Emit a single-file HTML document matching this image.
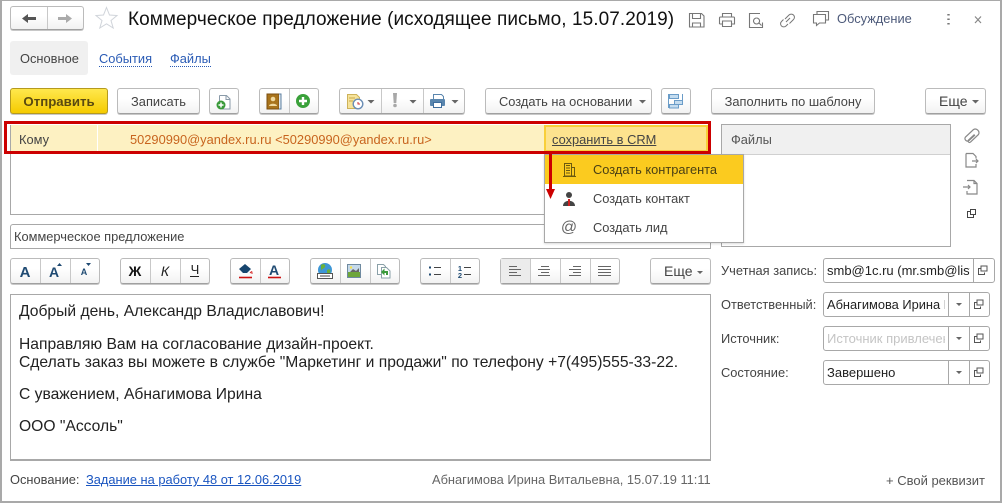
<!DOCTYPE html>
<html><head><meta charset="utf-8">
<style>
html,body{margin:0;padding:0;background:#fff}
#w{position:relative;width:1002px;height:503px;overflow:hidden;background:#fff;font-family:"Liberation Sans",sans-serif;font-size:12.85px;color:#3a3a3a}
#w>*{position:absolute;box-sizing:border-box}
.t{white-space:nowrap;line-height:16px}
.b{border:1px solid #bbb;border-bottom-color:#a0a0a0;border-radius:3px;background:linear-gradient(#fff 40%,#f2f2f2);box-shadow:0 1px 0 #c8c8c8;text-align:center;color:#444;white-space:nowrap;line-height:23px}
.s{width:1px;background:#c8c8c8}
.f{border:1px solid #a8a8a8;border-radius:3px;background:#fff}
.v{width:1px;background:#a8a8a8}
.lnk{color:#2a5bb5;border-bottom:1px dotted #2a5bb5;line-height:14px}
</style></head><body><div id="w">
<div style="left:0;top:0;width:1002px;height:503px;border:2px solid #a9a9a9;border-top-width:1px;border-bottom:0"></div>
<div style="left:0;top:501px;width:1002px;height:2px;background:#a9a9a9"></div>

<div class="b" style="left:10px;top:6px;width:74px;height:24px"></div>
<div class="s" style="left:47px;top:7px;height:22px"></div>
<div class="t" style="left:128px;top:10px;font-size:19px;line-height:20px;color:#111;letter-spacing:.07px">Коммерческое предложение (исходящее письмо, 15.07.2019)</div>
<div class="t" style="left:837px;top:11px;color:#4d5a7a">Обсуждение</div>

<div style="left:10px;top:41px;width:78px;height:34px;background:#f0f0f0;border-radius:3px"></div>
<div class="t" style="left:20px;top:51px;color:#444">Основное</div>
<div class="t lnk" style="left:99px;top:52px">События</div>
<div class="t lnk" style="left:170px;top:52px">Файлы</div>

<div class="b" style="left:10px;top:88px;width:98px;height:26px;background:linear-gradient(#ffe84d,#f5cb00);border-color:#b59a1e;font-weight:bold;color:#5a4a10;line-height:25px;font-size:13.25px">Отправить</div>
<div class="b" style="left:117px;top:88px;width:83px;height:26px;line-height:25px">Записать</div>
<div class="b" style="left:209px;top:88px;width:30px;height:26px"></div>
<div class="b" style="left:259px;top:88px;width:60px;height:26px"></div>
<div class="s" style="left:289px;top:89px;height:24px"></div>
<div class="b" style="left:339px;top:88px;width:126px;height:26px"></div>
<div class="s" style="left:381px;top:89px;height:24px"></div>
<div class="s" style="left:423px;top:89px;height:24px"></div>
<div class="b" style="left:485px;top:88px;width:167px;height:26px;line-height:25px;text-align:left;padding-left:13px">Создать на основании</div>
<div class="b" style="left:661px;top:88px;width:30px;height:26px"></div>
<div class="b" style="left:711px;top:88px;width:164px;height:26px;line-height:25px">Заполнить по шаблону</div>
<div class="b" style="left:925px;top:88px;width:61px;height:26px;line-height:25px;text-align:left;padding-left:13px;font-size:14px">Еще</div>

<div style="left:10px;top:125px;width:701px;height:90px;border:1px solid #a8a8a8;background:#fff"></div>
<div style="left:11px;top:125px;width:698px;height:27px;background:#fdf1c2"></div>
<div style="left:97px;top:125px;width:1px;height:27px;background:#fff"></div>
<div style="left:544px;top:125px;width:164px;height:27px;background:#fde38e;border:2px solid #f8cf3a"></div>
<div class="t" style="left:19px;top:132px;color:#444">Кому</div>
<div class="t" style="left:130px;top:132px;color:#c8641e">50290990@yandex.ru.ru &lt;50290990@yandex.ru.ru&gt;</div>
<div class="t" style="left:552px;top:132px;color:#444;text-decoration:underline">сохранить в CRM</div>
<div style="left:4px;top:121px;width:707px;height:33px;border:3px solid #cc0000"></div>

<div class="f" style="left:10px;top:224px;width:701px;height:25px;border-radius:3px 3px 0 0"></div>
<div class="t" style="left:14px;top:229px;color:#444">Коммерческое предложение</div>

<div style="left:721px;top:124px;width:230px;height:123px;border:1px solid #a8a8a8;background:#fff"></div>
<div style="left:722px;top:125px;width:228px;height:30px;background:#f0f0f0;border-bottom:1px solid #d0d0d0"></div>
<div class="t" style="left:731px;top:132px;color:#555">Файлы</div>

<div style="left:544px;top:154px;width:200px;height:89px;background:#fff;border:1px solid #a8a8a8;box-shadow:0 1px 2px rgba(0,0,0,.15)"></div>
<div style="left:545px;top:155px;width:198px;height:29px;background:#fbcb1f"></div>
<div class="t" style="left:593px;top:162px;color:#4a4015">Создать контрагента</div>
<div class="t" style="left:593px;top:191px;color:#444">Создать контакт</div>
<div class="t" style="left:593px;top:220px;color:#444">Создать лид</div>

<div class="b" style="left:10px;top:258px;width:90px;height:26px"></div>
<div class="s" style="left:40px;top:259px;height:24px"></div><div class="s" style="left:70px;top:259px;height:24px"></div>
<div class="b" style="left:120px;top:258px;width:90px;height:26px"></div>
<div class="s" style="left:150px;top:259px;height:24px"></div><div class="s" style="left:180px;top:259px;height:24px"></div>
<div class="t" style="left:120px;top:263px;width:30px;text-align:center;font-weight:bold;font-size:14px;color:#111">Ж</div>
<div class="t" style="left:150px;top:263px;width:30px;text-align:center;font-style:italic;font-size:14px;color:#222">К</div>
<div class="t" style="left:180px;top:262px;width:30px;text-align:center;font-size:13px;color:#222;">Ч</div>
<div class="b" style="left:230px;top:258px;width:60px;height:26px"></div>
<div class="s" style="left:260px;top:259px;height:24px"></div>
<div class="b" style="left:310px;top:258px;width:90px;height:26px"></div>
<div class="s" style="left:340px;top:259px;height:24px"></div><div class="s" style="left:370px;top:259px;height:24px"></div>
<div class="b" style="left:420px;top:258px;width:60px;height:26px"></div>
<div class="s" style="left:450px;top:259px;height:24px"></div>
<div class="b" style="left:500px;top:258px;width:120px;height:26px"></div>
<div style="left:501px;top:259px;width:30px;height:24px;background:#ececec"></div>
<div class="s" style="left:530px;top:259px;height:24px"></div><div class="s" style="left:560px;top:259px;height:24px"></div><div class="s" style="left:590px;top:259px;height:24px"></div>
<div class="b" style="left:650px;top:258px;width:61px;height:26px;line-height:25px;text-align:left;padding-left:13px;font-size:14px">Еще</div>

<div style="left:10px;top:294px;width:701px;height:167px;border:1px solid #a8a8a8;border-bottom:2px solid #a8a8a8;background:#fff"></div>
<div class="t" style="left:19px;top:304px;font-size:15.65px;color:#222">Добрый день, Александр Владиславович!</div>
<div class="t" style="left:19px;top:337px;font-size:15.65px;color:#222">Направляю Вам на согласование дизайн-проект.</div>
<div class="t" style="left:19px;top:355px;font-size:15.65px;color:#222">Сделать заказ вы можете в службе "Маркетинг и продажи" по телефону +7(495)555-33-22.</div>
<div class="t" style="left:19px;top:387px;font-size:15.65px;color:#222">С уважением, Абнагимова Ирина</div>
<div class="t" style="left:19px;top:419px;font-size:15.65px;color:#222">ООО "Ассоль"</div>

<div class="t" style="left:721px;top:263px;color:#444">Учетная запись:</div>
<div class="f" style="left:823px;top:258px;width:172px;height:25px"></div>
<div class="v" style="left:973px;top:259px;height:23px"></div>
<div class="t" style="left:827px;top:263px;width:143px;overflow:hidden;font-size:13px;color:#222">smb@1c.ru (mr.smb@list.ru)</div>
<div class="t" style="left:721px;top:297px;color:#444">Ответственный:</div>
<div class="f" style="left:823px;top:292px;width:167px;height:25px"></div>
<div class="v" style="left:948px;top:293px;height:23px"></div><div class="v" style="left:969px;top:293px;height:23px"></div>
<div class="t" style="left:827px;top:297px;width:118px;overflow:hidden;font-size:12.85px;color:#222">Абнагимова Ирина Витальевна</div>
<div class="t" style="left:721px;top:331px;color:#444">Источник:</div>
<div class="f" style="left:823px;top:326px;width:167px;height:25px"></div>
<div class="v" style="left:948px;top:327px;height:23px"></div><div class="v" style="left:969px;top:327px;height:23px"></div>
<div class="t" style="left:827px;top:331px;width:118px;overflow:hidden;color:#c4c4c4;font-size:13px">Источник привлечения</div>
<div class="t" style="left:721px;top:365px;color:#444">Состояние:</div>
<div class="f" style="left:823px;top:360px;width:167px;height:25px"></div>
<div class="v" style="left:948px;top:361px;height:23px"></div><div class="v" style="left:969px;top:361px;height:23px"></div>
<div class="t" style="left:827px;top:365px;font-size:13px;color:#222">Завершено</div>

<div class="t" style="left:10px;top:472px;color:#444">Основание:</div>
<div class="t" style="left:86px;top:472px;color:#1a55c0;text-decoration:underline">Задание на работу 48 от 12.06.2019</div>
<div class="t" style="left:432px;top:472px;color:#666">Абнагимова Ирина Витальевна, 15.07.19 11:11</div>
<div class="t" style="left:886px;top:473px;color:#555;font-size:13px">+ Свой реквизит</div>

<svg style="left:0;top:0" width="1002" height="503" viewBox="0 0 1002 503" fill="none">
<!-- nav arrows -->
<path d="M22 18.500l6-4.500v3h8v3h-8v3z" fill="#555"/><path d="M72 18.500l-6-4.500v3h-8v3h8v3z" fill="#aaa"/>
<path d="M106.500 7.500l3 7.500 7.500.5-6 5 2.200 7.500-6.700-4.200-6.700 4.200 2.200-7.500-6-5 7.500-.5z" stroke="#d0d4da" fill="#fff"/>
<!-- title icons -->
<g stroke="#777" stroke-width="1.100">
<path d="M689.500 13.500h12l2.500 2.500v11h-14.500zM692.500 13.500v5h8v-5M692.500 27v-4h8v4"/>
<path d="M722.500 17v-3.500h9v3.500M719.500 24v-6a1 1 0 0 1 1-1h13a1 1 0 0 1 1 1v6h-3M722.500 24h-3M722.500 21h9v5.500h-9z"/>
<path d="M760 13.500h-10.500v14h13v-5M756.500 18a3 3 0 1 0 .1 0M759 23l2.500 2.500"/>
<path d="M785 19l4-4a3 3 0 0 1 4.500 4.500l-4 4M788 24l-2 2a3 3 0 0 1-4.500-4.500l2-2M786 22l4-4" stroke-width="1"/>
<path d="M817 14v-2.500h11.500v8.500h-3M813.500 14.500h12v8.500h-6l-3 2.500v-2.500h-3z" stroke-width="1.100"/>
</g>
<path d="M948.500 14v1.500M948.500 18.500v1.500M948.500 23v1.500" stroke="#777" stroke-width="2.400"/>
<path d="M975 16.500l6 6.500M981 16.500l-6 6.500" stroke="#888" stroke-width="1.200"/>
<!-- new doc green -->
<path d="M219.500 95.500h7l3.500 3.500v10h-8" fill="#fff" stroke="#8a9aa8"/><path d="M219.500 95.500v6M226 95.500v4h4" stroke="#8a9aa8"/>
<circle cx="221" cy="105" r="4.500" fill="#3a9a3a"/><path d="M218.500 105h5M221 102.500v5" stroke="#fff" stroke-width="1.500"/>
<!-- book -->
<path d="M267 94h12v15h-12z" fill="#a9741c" stroke="#7a4e10"/><path d="M279 94h2v15h-2" stroke="#5c7fa0" fill="#dfe8f0"/><circle cx="273" cy="99" r="2.300" fill="#f0d9a0"/><path d="M269 106c0-3 8-3 8 0z" fill="#f0d9a0"/>
<circle cx="303" cy="101" r="7" fill="#3aa13a"/><path d="M299 101h8M303 97v8" stroke="#fff" stroke-width="2.400"/>
<!-- doc clock -->
<path d="M347.500 94.500h9l3 3v11h-12z" fill="#f6e39a" stroke="#cdb25a"/><path d="M349 98h6M349 101h4" stroke="#c9a94a"/>
<circle cx="358" cy="104" r="4.800" fill="#fff" stroke="#6a8db5" stroke-width="1.400"/><path d="M358 102v2h2" stroke="#c33"/>
<path d="M367.500 100h7l-3.500 3.500zM409.500 100h7l-3.500 3.500zM451.500 100h7l-3.500 3.500zM639 100h7l-3.500 3.500zM972 100h7l-3.500 3.500z" fill="#666"/>
<path d="M393 93h4l-.7 10h-2.600z" fill="#a8a8a8"/><circle cx="395" cy="105.500" r="1.800" fill="#a8a8a8"/>
<!-- print -->
<path d="M433.500 99v-4.500h8l2 2v2.500" stroke="#5a86ae" fill="#fff"/><rect x="430" y="99" width="15" height="7" rx="1" fill="#5a86ae"/><rect x="433.500" y="102.500" width="8" height="5" fill="#fff" stroke="#3e6d9c"/>
<!-- structure -->
<g stroke="#6a9cc8"><rect x="669.500" y="94.500" width="9" height="4" fill="#c4dcef"/><rect x="674.500" y="100.500" width="8" height="4" fill="#c4dcef"/><rect x="669.500" y="104.500" width="9" height="3.500" fill="#c4dcef"/><path d="M668.500 94v14M682.500 94v6"/></g>
<!-- right side icons -->
<g stroke="#888" stroke-width="1.200">
<path d="M975 135l-6 5.500a2.500 2.500 0 0 1-3.500-3.500l8-7.500a3.700 3.700 0 0 1 5 5l-8 7.500a1.400 1.400 0 0 1-2-2l6-5.500"/>
<path d="M966 153.500h7l3 3v2M966 153.500v13.500h10v-3M972 161h6M976 159l2 2-2 2"/>
<path d="M967 180.500h7l3 3v10.500h-10v-3M974 180.500v3h3M963 187h7M968 185l2 2-2 2"/>
</g>
<g stroke="#444"><path d="M970.500 211.500h-3v6h6v-3"/><rect x="970.500" y="209.500" width="5" height="5" fill="#fff"/></g>
<!-- field pick icons -->
<g stroke="#555" fill="#fff">
<path d="M980.500 268.500h-2v6h6v-2"/><rect x="981" y="266" width="6" height="5"/>
<path d="M976.500 302.500h-2v6h6v-2"/><rect x="977" y="300" width="6" height="5"/>
<path d="M976.500 336.500h-2v6h6v-2"/><rect x="977" y="334" width="6" height="5"/>
<path d="M976.500 370.500h-2v6h6v-2"/><rect x="977" y="368" width="6" height="5"/>
</g>
<path d="M956 303h6l-3 3zM956 337h6l-3 3zM956 371h6l-3 3zM697 271h6l-3 3z" fill="#666"/>
<!-- menu icons -->
<path d="M564.500 163.500h7v12.500h-7zM571.500 167.500h3v8.500h-3M563 176.500h13M566 165.500h4M566 168h4M566 170.500h4M566 173h4" stroke="#6b5a10" stroke-width="1"/>
<circle cx="569" cy="195" r="3" fill="#444"/><path d="M563 206c0-7 12-7 12 0z" fill="#444"/><path d="M568 199h2v7h-2z" fill="#d02020"/>
<text x="569" y="232" font-family="Liberation Sans,sans-serif" font-size="16" fill="#666" text-anchor="middle">@</text>
<!-- red arrow -->
<path d="M550.500 154v36" stroke="#cc0000" stroke-width="3"/><path d="M546 189h9l-4.500 10z" fill="#cc0000"/>
<!-- format A -->
<text x="25" y="277" font-family="Liberation Sans,sans-serif" font-weight="bold" font-size="15" fill="#1f4a72" text-anchor="middle">A</text>
<text x="54" y="277" font-family="Liberation Sans,sans-serif" font-weight="bold" font-size="14" fill="#1f4a72" text-anchor="middle">A</text>
<path d="M57 266h5l-2.500-3zM86 263h5l-2.500 3z" fill="#1f4a72"/>
<text x="84" y="275" font-family="Liberation Sans,sans-serif" font-weight="bold" font-size="9" fill="#1f4a72" text-anchor="middle">A</text>
<path d="M190 276.500h9" stroke="#222"/>
<path d="M245 264l6 5-4 4h-4l-4-4z" fill="#17456e"/><path d="M250 273c2-2 2-2 2 1" stroke="#d42020"/><path d="M239 277.500h13" stroke="#cc1111" stroke-width="1.600"/>
<text x="274" y="275" font-family="Liberation Sans,sans-serif" font-weight="bold" font-size="14" fill="#1f4a72" text-anchor="middle">A</text><path d="M268 277.500h13" stroke="#cc1111" stroke-width="1.600"/>
<!-- globe / image / copy -->
<circle cx="325" cy="270" r="7" fill="#3d96d6"/><path d="M321 265c3-2 5 0 4 2s-3 1-4 4zM327 270c3-2 4 0 3 3l-3 1z" fill="#69b03a"/><rect x="317.500" y="273.500" width="15" height="5" fill="#fff" stroke="#555"/><path d="M320 276h10" stroke="#444"/>
<rect x="347.500" y="264.500" width="13" height="13" fill="#c5d9ea" stroke="#6f8aa0"/><path d="M348 277v-5h12v5z" fill="#6ea63a"/><path d="M350 272l3-3 3 2 3-3v4z" fill="#666"/><circle cx="351" cy="267.500" r="1.200" fill="#f4e14a"/>
<path d="M377.500 264.500h6l2 2v8h-8z" fill="#fff" stroke="#8aa0a8"/><path d="M381.500 267.500h5l3.500 3.500v7h-8.500z" fill="#fff" stroke="#8aa0a8"/><path d="M381 272l3.500-3.500v2.500h3.500v4h-2v-2h-1.500v2.500z" fill="#3a9a3a"/>
<!-- lists -->
<path d="M429 267.500h2M429 274.500h2" stroke="#1f4a72" stroke-width="2"/><path d="M434 267.500h7M434 274.500h7M464 267.500h7M464 274.500h7" stroke="#444"/>
<text x="460" y="271" font-family="Liberation Sans,sans-serif" font-weight="bold" font-size="7.500" fill="#1f4a72" text-anchor="middle">1</text><text x="460" y="278" font-family="Liberation Sans,sans-serif" font-weight="bold" font-size="7.500" fill="#1f4a72" text-anchor="middle">2</text>
<!-- alignment -->
<g stroke="#666"><path d="M509 266.500h8M509 269.500h12M509 272.500h8M509 275.500h12"/><path d="M541 266.500h8M538 269.500h12M541 272.500h8M538 275.500h12"/><path d="M573 266.500h8M569 269.500h12M573 272.500h8M569 275.500h12"/><path d="M598 266.500h13M598 269.500h13M598 272.500h13M598 275.500h13"/></g>
</svg>
</div></body></html>
